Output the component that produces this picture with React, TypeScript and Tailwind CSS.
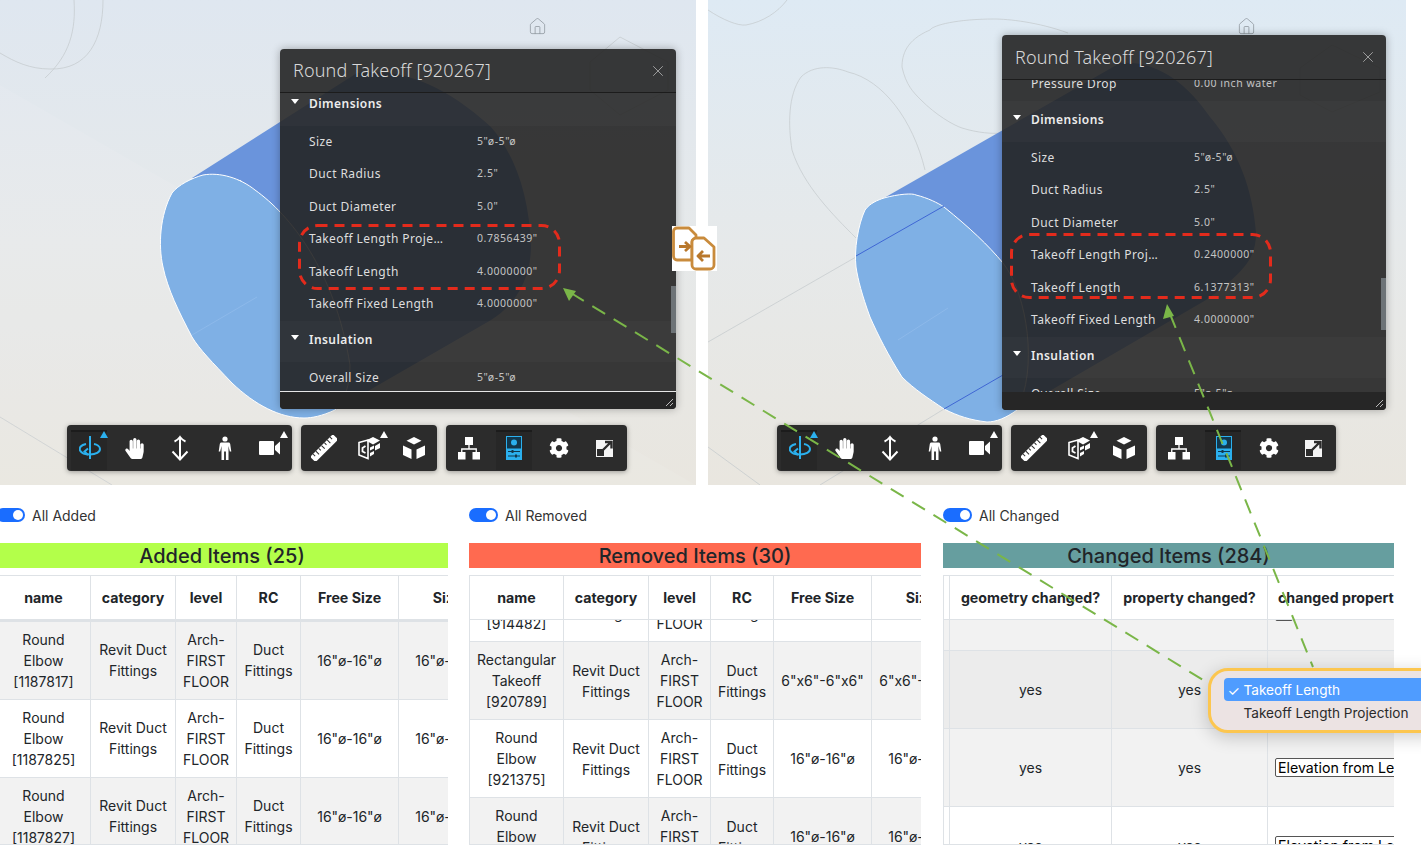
import React from 'react';
import { House, X } from 'lucide-react';
import { FaHandPaper, FaCog } from 'react-icons/fa';

const blue = '#2bb0ee';

const OrbitIcon = () => (
  <svg width="22" height="24" viewBox="0 0 22 24" fill="none" stroke={blue} strokeWidth="2">
    <path d="M11 0v23" />
    <path d="M7 8C2 9 0 11.500 1 14.500 3 18 8 18.500 11 18.500c6 0 10-2.500 10-5.500 0-2.500-3-4.500-6-5" />
    <path d="M9 12.500l-3.500 3 3.500 3.500" />
  </svg>
);

const UpDownIcon = () => (
  <svg width="20" height="26" viewBox="0 0 20 26" fill="none" stroke="#fff" strokeWidth="2">
    <path d="M10 2v22M4.500 6.500C7 5.500 8.500 4 10 2c1.500 2 3 3.500 5.500 4.500M2.500 16.500l7.500 8 7.500-8" />
  </svg>
);

const PersonIcon = () => (
  <svg width="18" height="24" viewBox="0 0 18 24" fill="#fff">
    <circle cx="9" cy="3" r="2.600" />
    <path d="M5.500 6.500h7c1 0 1.500.6 1.700 1.500l1.100 7.500h-1.500L12.500 10v14h-2.600v-8.500H8.100V24H5.500V10l-1.300 5.500H2.700L3.800 8c.2-.9.7-1.500 1.700-1.500z" />
  </svg>
);

const CameraIcon = () => (
  <svg width="22" height="16" viewBox="0 0 22 16" fill="#fff">
    <rect x="0" y="1" width="15" height="14" rx="1" />
    <path d="M16 6l5-4.500v13L16 10z" />
  </svg>
);

const RulerIcon = () => (
  <svg width="26" height="26" viewBox="0 0 26 26">
    <g transform="rotate(-45 13 13)">
      <rect x="-3" y="9.500" width="32" height="7.500" fill="#fff" />
      <path d="M1 9.500v3M5 9.500v4.500M9 9.500v3M13 9.500v4.500M17 9.500v3M21 9.500v4.500M25 9.500v3" stroke="#2c2c2c" strokeWidth="1" />
    </g>
  </svg>
);

const SectionIcon = () => (
  <svg width="24" height="24" viewBox="0 0 24 24" fill="none" stroke="#fff" strokeWidth="1.600">
    <path d="M2 6.500l9-2.500v18.500l-9-3.500z" />
    <path d="M9 4.500L16 1l7 3.500-7 4z" fill="#fff" stroke="none" />
    <path d="M13 11.500l4-2v3l-4 2zM23 7v5l-5 2.500v-4.500zM13 17l4-2v3l-4 2.500z" fill="#fff" stroke="none" />
    <path d="M8.500 10l-3 2v3.500l3 1.500" strokeWidth="1.800" />
  </svg>
);

const ExplodeIcon = () => (
  <svg width="24" height="24" viewBox="0 0 24 24" fill="#fff">
    <path d="M12 1l7.500 3.800L12 8.600 4.500 4.800z" />
    <path d="M1 9.500l8.500 4v9.500L1 19z" />
    <path d="M23 9.500l-8.500 4v9.500l8.500-4z" />
  </svg>
);

const StructureIcon = () => (
  <svg width="24" height="24" viewBox="0 0 24 24" fill="#fff">
    <rect x="8" y="1" width="8" height="8" />
    <rect x="1" y="16" width="7.500" height="7.500" />
    <rect x="15.500" y="16" width="7.500" height="7.500" />
    <path d="M12 9v4M4.750 16v-3h14.500v3" fill="none" stroke="#fff" strokeWidth="1.300" />
  </svg>
);

const PropertiesIcon = () => (
  <svg width="16" height="24" viewBox="0 0 16 24">
    <rect x=".5" y=".5" width="15" height="23" fill="#12384d" stroke={blue} />
    <circle cx="8" cy="6.500" r="3" fill={blue} />
    <rect x="1" y="12.500" width="14" height="11" fill={blue} />
    <path d="M2 15.500h12M2 20h12" stroke="#12384d" strokeWidth="1" />
    <rect x="5.500" y="14" width="2" height="3" fill="#12384d" />
    <rect x="9" y="18.500" width="2" height="3" fill="#12384d" />
  </svg>
);

const ExpandIcon = () => (
  <svg width="17" height="17" viewBox="0 0 17 17">
    <rect width="17" height="17" fill="#f4f4f4" />
    <rect x="1" y="9" width="7" height="7" fill="#2c2c2c" />
    <path d="M5 12L14.500 2.500M9 2h6.500v6.500" fill="none" stroke="#2c2c2c" strokeWidth="2.400" />
  </svg>
);

const Tool = ({ active, badge, children }: { active?: boolean; badge?: 'white' | 'blue'; children: React.ReactNode }) => (
  <div className="relative flex w-[45px] items-center justify-center">
    {active && <div className="absolute top-[5px] bottom-[1px] left-[4px] w-[36px] border-t-2 border-[#1c1c1c] bg-[#272727]" />}
    <div className="relative flex">{children}</div>
    {badge === 'white' && <div className="absolute top-[6px] right-[4px] h-0 w-0 border-x-[4px] border-b-[7px] border-x-transparent border-b-white" />}
    {badge === 'blue' && <div className="absolute top-[6px] right-[4px] h-0 w-0 border-x-[4px] border-b-[7px] border-x-transparent border-b-[#2bb0ee]" />}
  </div>
);

const ToolGroup = ({ w, children }: { w: string; children: React.ReactNode }) => (
  <div className={`flex h-[46px] justify-center rounded-[4px] bg-[#2c2c2c] shadow-[0_1px_5px_rgba(0,0,0,0.35)] ${w}`}>{children}</div>
);

const Toolbar = ({ pos, lastW }: { pos: string; lastW: string }) => (
  <div className={`absolute bottom-[14px] flex gap-[9px] ${pos}`}>
    <ToolGroup w="w-[225px]">
      <Tool active badge="blue"><OrbitIcon /></Tool>
      <Tool><FaHandPaper size={21} color="#fff" /></Tool>
      <Tool><UpDownIcon /></Tool>
      <Tool><PersonIcon /></Tool>
      <Tool badge="white"><CameraIcon /></Tool>
    </ToolGroup>
    <ToolGroup w="w-[136px]">
      <Tool><RulerIcon /></Tool>
      <Tool badge="white"><SectionIcon /></Tool>
      <Tool><ExplodeIcon /></Tool>
    </ToolGroup>
    <ToolGroup w={lastW}>
      <Tool><StructureIcon /></Tool>
      <Tool active><PropertiesIcon /></Tool>
      <Tool><FaCog size={20} color="#fff" /></Tool>
      <Tool><ExpandIcon /></Tool>
    </ToolGroup>
  </div>
);

type PanelItem = { section?: boolean; name: string; value?: string };

const SectionRow = ({ name }: { name: string }) => (
  <div className="relative h-[41px] bg-white/[0.025] pt-[9px] pl-[29px] text-[12px] leading-[20px] font-semibold tracking-[0.45px] text-[#ececec]">
    <div className="absolute top-[14px] left-[11px] h-0 w-0 border-x-[4.500px] border-t-[5px] border-x-transparent border-t-white" />
    {name}
  </div>
);

const PropRow = ({ name, value, nameW }: { name: string; value?: string; nameW: string }) => (
  <div className="flex h-[32.500px] items-center pl-[29px]">
    <div className={`text-[12px] tracking-[0.42px] text-[#dedede] ${nameW}`}>{name}</div>
    <div className="text-[10.500px] tracking-[0.55px] text-[#c4c4c4]">{value}</div>
  </div>
);

const dimensionItems = (proj: string, projValue: string, length: string): PanelItem[] => [
  { section: true, name: 'Dimensions' },
  { name: 'Size', value: '5"ø-5"ø' },
  { name: 'Duct Radius', value: '2.5"' },
  { name: 'Duct Diameter', value: '5.0"' },
  { name: proj, value: projValue },
  { name: 'Takeoff Length', value: length },
  { name: 'Takeoff Fixed Length', value: '4.0000000"' },
  { section: true, name: 'Insulation' },
  { name: 'Overall Size', value: '5"ø-5"ø' },
];

const TakeoffPanel = ({ pos, headH, scroll, bar, nameW, items, line }: { pos: string; headH: string; scroll: string; bar: string; nameW: string; items: PanelItem[]; line?: boolean }) => (
  <div className={`absolute flex flex-col overflow-hidden rounded-[4px] bg-[#242424]/90 shadow-[0_0_8px_rgba(0,0,0,0.3)] ${pos}`} style={{ fontFamily: '"Noto Sans", sans-serif' }}>
    <div className={`flex shrink-0 items-center justify-between border-b border-[#1c1c1c] pr-[9px] pl-[13px] ${headH}`}>
      <span className="text-[18px] font-light tracking-[0.15px] text-[#d8d8d8]">Round Takeoff [920267]</span>
      <X size={18} strokeWidth={1} color="#bdbdbd" />
    </div>
    <div className="relative min-h-0 flex-1 overflow-hidden">
      <div className={scroll}>
        {items.map((item, i) =>
          item.section ? <SectionRow key={i} name={item.name} /> : <PropRow key={i} name={item.name} value={item.value} nameW={nameW} />
        )}
      </div>
      <div className={`absolute right-0 w-[5px] bg-[#6d7377] ${bar}`} />
    </div>
    <div className={`relative h-[18px] shrink-0 bg-[#262626] ${line ? 'border-t border-[#e6e6e6]' : ''}`}>
      <svg className="absolute right-[2px] bottom-[2px]" width="9" height="9" viewBox="0 0 9 9" stroke="#bbb" strokeWidth="1">
        <path d="M1 8l7-7M5 8l3-3" />
      </svg>
    </div>
  </div>
);

const LeftScene = () => (
  <svg className="absolute inset-0" width="696" height="485" viewBox="0 0 696 485" fill="none">
    <g stroke="#c3c8cc" strokeWidth=".7">
      <path d="M74 0C76 30 70 55 45 78" />
      <path d="M103 0C103 40 88 70 50 69C30 69 15 62 0 53" />
      <path d="M0 417L112 485" />
      <path d="M620 37L590 62V90L620 115L668 90V62Z" />
    </g>
    <path d="M0 85L696 485H0Z" fill="#fff" opacity=".08" />
    <path d="M192 178L357 73C395 68 440 80 491 127C515 155 529 195 531 245C531 280 515 305 491 320L335 410L300 350L241 180Z" fill="#6a94dc" />
    <path d="M172 193C178 185 192 178 203 175C220 172 240 178 255 190C290 215 335 270 350 365C350 385 345 400 335 410C322 416 312 418 304 418C280 418 255 405 232 383C212 362 200 350 192 337C178 310 168 290 163 267C158 245 160 215 172 193Z" fill="#7fb0e5" stroke="#fff" strokeWidth="1" />
    <path d="M192 335L257 297" stroke="#8db9ea" strokeWidth="1" />
  </svg>
);

const RightScene = () => (
  <svg className="absolute inset-0" width="698" height="485" viewBox="0 0 698 485" fill="none">
    <g stroke="#c3c8cc" strokeWidth=".7">
      <path d="M0 10C15 20 30 26 38 25C55 22 70 12 79 0" />
      <path d="M217 170C205 120 175 80 140 72C125 66 105 65 93 77C80 95 80 125 84 150C95 185 125 215 148 238" />
      <path d="M360 33C330 22 300 19 286 19C250 19 225 25 222 30C198 40 194 55 194 67C198 85 205 92 213 100C228 115 245 125 254 128C270 133 285 134 295 133" />
      <path d="M148 257L0 342" />
      <path d="M0 447L52 485" />
      <path d="M236 409L112 485" />
      <path d="M624 45L592 68V95L624 112L672 92V68Z" />
    </g>
    <path d="M176 198L295 130L412 63C450 60 480 85 502 117C530 150 545 190 548 233C548 255 540 270 498 300L309 410L280 340L236 207Z" fill="#6a94dc" />
    <path d="M157 210C162 203 170 200 176 198C190 194 205 193 208 195C220 198 230 203 236 207C262 228 280 245 295 263C320 295 330 370 309 410C298 418 288 422 279 422C262 420 250 416 236 409C220 398 207 390 194 377C180 355 170 335 162 317C154 295 150 280 148 267C146 250 150 225 157 210Z" fill="#7fb0e5" stroke="#fff" strokeWidth="1" />
    <path d="M148 256L236 206M236 409L295 375" stroke="#3f66d4" strokeWidth="1" />
    <path d="M190 340L240 308" stroke="#8db9ea" strokeWidth="1" />
  </svg>
);

const colsAdded = ['w-[94px]', 'w-[85px]', 'w-[61px]', 'w-[64px]', 'w-[98px]', 'w-[98px]'];
const colsRemoved = ['w-[94px]', 'w-[85px]', 'w-[62px]', 'w-[63px]', 'w-[98px]', 'w-[98px]'];
const colsChanged = ['w-[6px]', 'w-[162px]', 'w-[156px]', 'w-[200px]'];

const ColGroup = ({ cols }: { cols: string[] }) => (
  <colgroup>
    {cols.map((c, i) => <col key={i} className={c} />)}
  </colgroup>
);

const Cell = ({ children }: { children?: React.ReactNode }) => (
  <td className="border border-[#dee2e6] px-[6px] text-center align-middle">{children}</td>
);

const DataTable = ({ cols, width, head, rows, scroll, headBorder, leftHead }: {
  cols: string[];
  width: string;
  head: string[];
  rows: { bg: string; cells: React.ReactNode[] }[];
  scroll: string;
  headBorder: string;
  leftHead?: boolean;
}) => (
  <div className="mt-[7px] flex h-[270px] flex-col overflow-hidden border-b border-[#dee2e6]">
    <table className={`shrink-0 table-fixed border-collapse text-[14.200px] leading-[21px] ${width}`}>
      <ColGroup cols={cols} />
      <thead>
        <tr className="h-[44px]">
          {head.map((h, i) => (
            <th key={i} className={`overflow-hidden border-x border-t border-[#dee2e6] font-bold whitespace-nowrap text-[#212529] ${headBorder} ${leftHead && i === head.length - 1 ? 'pl-[10px] text-left' : 'text-center'}`}>{h}</th>
          ))}
        </tr>
      </thead>
    </table>
    <div className="min-h-0 flex-1 overflow-hidden">
      <table className={`table-fixed border-collapse text-[14px] leading-[21px] text-[#212529] ${width} ${scroll}`}>
        <ColGroup cols={cols} />
        <tbody>
          {rows.map((row, i) => (
            <tr key={i} className={`h-[78px] ${row.bg}`}>
              {row.cells.map((c, j) => <Cell key={j}>{c}</Cell>)}
            </tr>
          ))}
        </tbody>
      </table>
    </div>
  </div>
);

const Lines = ({ parts }: { parts: string[] }) => (
  <>{parts.map((p, i) => <div key={i}>{p}</div>)}</>
);

const fittingRow = (bg: string, name: string[], size: string) => ({
  bg,
  cells: [
    <Lines parts={name} />,
    <Lines parts={['Revit Duct', 'Fittings']} />,
    <Lines parts={['Arch-', 'FIRST', 'FLOOR']} />,
    <Lines parts={['Duct', 'Fittings']} />,
    <span className="whitespace-nowrap">{size}</span>,
    <span className="whitespace-nowrap">{size}</span>,
  ],
});

const PropSelect = ({ w, label }: { w: string; label: string }) => (
  <select defaultValue={label} className={`block h-[19px] appearance-none rounded-[2px] border border-[#555] bg-white pl-[2px] text-[14.200px] leading-[17px] text-black ${w}`}>
    <option>{label}</option>
  </select>
);

const changedRow = (bg: string, select: React.ReactNode) => ({
  bg,
  cells: [null, 'yes', 'yes', <div className="ml-[1px]">{select}</div>],
});

const head1 = ['name', 'category', 'level', 'RC', 'Free Size', 'Size'];

const Column = ({ label, title, titleBg, size, children }: { label: string; title: string; titleBg: string; size: string; children: React.ReactNode }) => (
  <div className={`shrink-0 ${size}`}>
    <div className="flex h-[14px] items-center gap-[7px] text-[14px] text-[#333]">
      <div className="flex h-[14px] w-[29px] items-center justify-end rounded-full bg-[#1a6dff] pr-[2px]">
        <div className="h-[10px] w-[10px] rounded-full bg-white" />
      </div>
      <span className="pt-[1px]">{label}</span>
    </div>
    <div className={`mt-[21px] flex h-[25px] items-center justify-center text-[20px] font-medium text-[#212529] ${titleBg}`}>{title}</div>
    {children}
  </div>
);

const DocSwapIcon = () => (
  <svg width="45" height="45" viewBox="0 0 45 45" fill="none" stroke="#c98b3c" strokeWidth="2.800" strokeLinejoin="round">
    <path d="M5 2h12l7 7v5h-2c-1.500 0-2 1-2 2v18H5c-2 0-3.500-1.800-3.500-4V5.500C1.500 3.500 3 2 5 2z" fill="#fff" />
    <path d="M24 12h8l10 9v18c0 2.200-1.800 4-4 4H24c-2.200 0-4-1.800-4-4V16c0-2.200 1.800-4 4-4z" fill="#fff" />
    <path d="M7 20.500h10M13 16l5 4.500-5 4.500" stroke="#b9782c" />
    <path d="M38 30H27M31 25l-5 5 5 5" stroke="#b9782c" />
  </svg>
);

export default function App() {
  return (
    <div className="relative h-[847px] w-[1421px] overflow-hidden bg-white" style={{ fontFamily: 'Inter, sans-serif' }}>
      <div className="flex h-[485px]">
        <div className="relative h-full w-[696px] overflow-hidden bg-gradient-to-b from-[#dfe7f0] via-[#e6e9ea] to-[#e9e6df]">
          <LeftScene />
          <House size={19} strokeWidth={1} color="#8f979e" className="absolute top-[17px] left-[528px]" />
          <TakeoffPanel
            pos="top-[49px] left-[280px] h-[360px] w-[396px]"
            headH="h-[44px]"
            scroll="-mt-[8.400px]"
            bar="top-[193px] h-[47px]"
            nameW="w-[168px]"
            items={dimensionItems('Takeoff Length Proje…', '0.7856439"', '4.0000000"')}
            line
          />
          <Toolbar pos="left-[67px]" lastW="w-[181px]" />
        </div>
        <div className="relative ml-[12px] h-full w-[698px] overflow-hidden bg-gradient-to-b from-[#deeaf4] via-[#e6e9ea] to-[#e9e6df]">
          <RightScene />
          <House size={19} strokeWidth={1} color="#8f979e" className="absolute top-[17px] left-[529px]" />
          <TakeoffPanel
            pos="top-[35px] left-[294px] h-[375px] w-[384px]"
            headH="h-[45px]"
            scroll="-mt-[12px]"
            bar="top-[198px] h-[52px]"
            nameW="w-[163px]"
            items={[{ name: 'Pressure Drop', value: '0.00 inch water' }, ...dimensionItems('Takeoff Length Proj…', '0.2400000"', '6.1377313"')]}
          />
          <Toolbar pos="left-[69px]" lastW="w-[180px]" />
        </div>
      </div>

      <div className="flex gap-[21px] pt-[23px]">
        <Column label="All Added" title="Added Items (25)" titleBg="bg-[#b3ff4a]" size="-ml-[4px] w-[452px]">
          <DataTable
            cols={colsAdded}
            width="w-[500px]"
            head={head1}
            headBorder="border-b-2"
            scroll=""
            rows={[
              fittingRow('bg-[#f2f2f2]', ['Round', 'Elbow', '[1187817]'], '16"ø-16"ø'),
              fittingRow('bg-white', ['Round', 'Elbow', '[1187825]'], '16"ø-16"ø'),
              fittingRow('bg-[#f2f2f2]', ['Round', 'Elbow', '[1187827]'], '16"ø-16"ø'),
            ]}
          />
        </Column>
        <Column label="All Removed" title="Removed Items (30)" titleBg="bg-[#ff6a50]" size="w-[452px]">
          <DataTable
            cols={colsRemoved}
            width="w-[500px]"
            head={head1}
            headBorder="border-b"
            scroll="-mt-[57px]"
            rows={[
              fittingRow('bg-white', ['Round', 'Elbow', '[914482]'], '16"ø-16"ø'),
              fittingRow('bg-[#f2f2f2]', ['Rectangular', 'Takeoff', '[920789]'], '6"x6"-6"x6"'),
              fittingRow('bg-white', ['Round', 'Elbow', '[921375]'], '16"ø-16"ø'),
              fittingRow('bg-[#f2f2f2]', ['Round', 'Elbow', '[921377]'], '16"ø-16"ø'),
            ]}
          />
        </Column>
        <Column label="All Changed" title="Changed Items (284)" titleBg="bg-[#669e9f]" size="ml-[1px] w-[451px]">
          <DataTable
            cols={colsChanged}
            width="w-[524px]"
            head={['', 'geometry changed?', 'property changed?', 'changed property']}
            headBorder="border-b"
            scroll="-mt-[48px]"
            leftHead
            rows={[
              changedRow('bg-[#f2f2f2]', <PropSelect w="w-[18px]" label="" />),
              changedRow('bg-[#ececec]', <PropSelect w="w-[180px]" label="Takeoff Length" />),
              changedRow('bg-[#f2f2f2]', <PropSelect w="w-[180px]" label="Elevation from Level" />),
              changedRow('bg-white', <PropSelect w="w-[180px]" label="Elevation from Level" />),
            ]}
          />
        </Column>
      </div>

      <svg className="pointer-events-none absolute inset-0" width="1421" height="847" viewBox="0 0 1421 847" fill="none">
        <rect x="299.500" y="225.500" width="260" height="63" rx="18" stroke="#e32b1c" strokeWidth="3" strokeDasharray="10 7" />
        <rect x="1011.500" y="234.500" width="259" height="63" rx="18" stroke="#e32b1c" strokeWidth="3" strokeDasharray="10 7" />
        <path d="M571 293L1208 683" stroke="#7ab648" strokeWidth="2" strokeDasharray="15 10" />
        <path d="M1170 314L1313 667" stroke="#7ab648" strokeWidth="2" strokeDasharray="15 10" />
        <path d="M563 288L576 291L569 301Z" fill="#7ab648" />
        <path d="M1167 304L1174 316L1163 319Z" fill="#7ab648" />
      </svg>

      <div className="absolute top-[226px] left-[672px] bg-white">
        <DocSwapIcon />
      </div>

      <div className="absolute top-[668px] left-[1208px] flex h-[65px] w-[240px] flex-col rounded-[20px] border-[3.500px] border-[#fcc64f] bg-[#ece3e3] pt-[7px] pl-[12.500px] text-[13.600px] shadow-[0_4px_18px_rgba(0,0,0,0.2)]">
        <div className="flex h-[23px] items-center rounded-[4px] bg-[#4f9cff] pt-[1px] pl-[4px] text-white">
          <span className="w-[16px] text-[14px]">✓</span>
          <span>Takeoff Length</span>
        </div>
        <div className="flex h-[23px] items-center pt-[1px] pl-[20px] text-[#2a2a2a]">Takeoff Length Projection</div>
      </div>
    </div>
  );
}
